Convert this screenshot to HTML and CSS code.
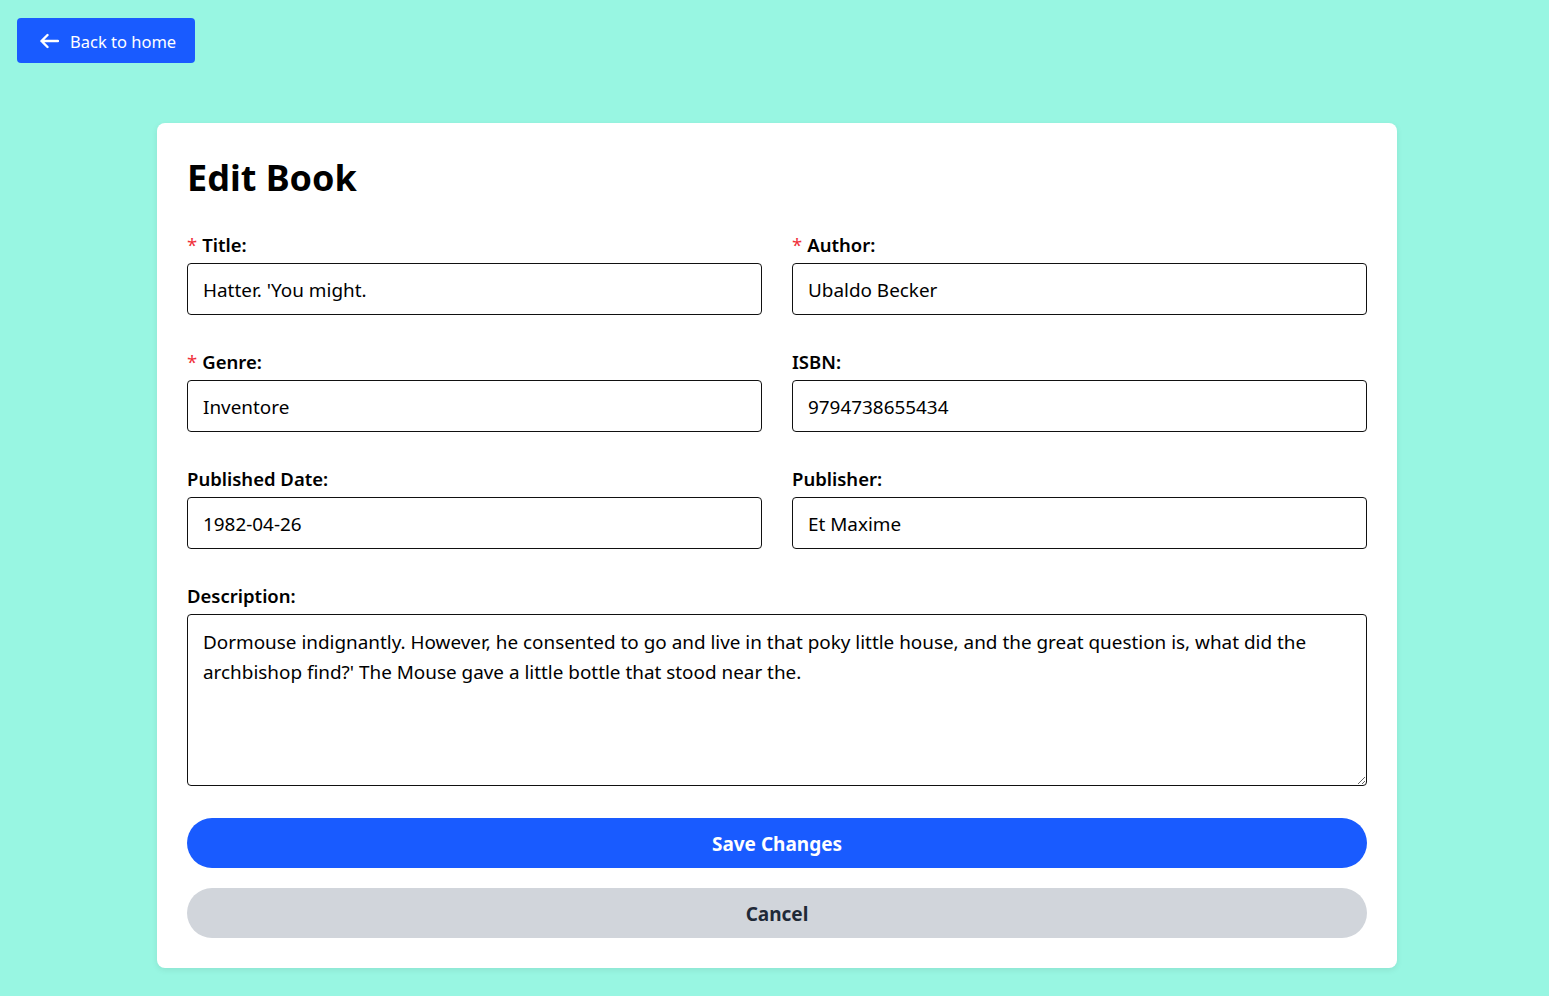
FILE: index.html
```html
<!DOCTYPE html>
<html lang="en">
<head>
<meta charset="utf-8">
<title>Edit Book</title>
<link rel="stylesheet" href="styles.css">
</head>
<body>
<div class="page">
  <a class="back-btn" href="#">
    <svg class="back-icon" viewBox="0 0 20 16" width="20" height="16" aria-hidden="true">
      <path d="M19 8H2.5M8.5 2L2.5 8l6 6" fill="none" stroke="#fff" stroke-width="2.4" stroke-linecap="round" stroke-linejoin="round"/>
    </svg>
    <span>Back to home</span>
  </a>
  <div class="wrap">
    <form class="card">
      <h1 class="card-title">Edit Book</h1>
      <div class="grid">
        <div class="field">
          <label class="label"><span class="req">*</span>Title:</label>
          <input class="input" type="text" value="Hatter. 'You might.">
        </div>
        <div class="field">
          <label class="label"><span class="req">*</span>Author:</label>
          <input class="input" type="text" value="Ubaldo Becker">
        </div>
        <div class="field">
          <label class="label"><span class="req">*</span>Genre:</label>
          <input class="input" type="text" value="Inventore">
        </div>
        <div class="field">
          <label class="label">ISBN:</label>
          <input class="input" type="text" value="9794738655434">
        </div>
        <div class="field">
          <label class="label">Published Date:</label>
          <input class="input" type="text" value="1982-04-26">
        </div>
        <div class="field">
          <label class="label">Publisher:</label>
          <input class="input" type="text" value="Et Maxime">
        </div>
        <div class="field full">
          <label class="label">Description:</label>
          <textarea class="textarea">Dormouse indignantly. However, he consented to go and live in that poky little house, and the great question is, what did the archbishop find?' The Mouse gave a little bottle that stood near the.</textarea>
        </div>
      </div>
      <div class="actions">
        <button class="btn btn-save" type="button">Save Changes</button>
        <button class="btn btn-cancel" type="button">Cancel</button>
      </div>
    </form>
  </div>
</div>
</body>
</html>
```
FILE: styles.css
```css
* { box-sizing: border-box; }
html, body { margin: 0; }
body {
  background: #98f6e2;
  font-family: "Noto Sans", "Open Sans", sans-serif;
  color: #000;
  min-height: 996px;
}
.page {
  padding: 18px 17px 28px;
}
.back-btn {
  display: inline-flex;
  align-items: center;
  gap: 11px;
  height: 45px;
  width: 178px;
  padding: 0 0 0 22px;
  background: #195bff;
  color: #fff;
  border-radius: 4px;
  text-decoration: none;
  font-size: 16.5px;
}
.back-btn span { position: relative; top: 1px; }
.back-icon { flex: none; }
.wrap {
  display: flex;
  justify-content: center;
  padding-left: 5px;
  margin-top: 60px;
}
.card {
  width: 1240px;
  background: #fff;
  border-radius: 8px;
  padding: 30px 30px 30px;
  box-shadow: 0 2px 6px rgba(0,0,0,0.08);
}
.card-title {
  margin: 0;
  font-size: 36px;
  line-height: 50px;
  font-weight: 700;
}
.grid {
  display: grid;
  grid-template-columns: 1fr 1fr;
  column-gap: 30px;
  row-gap: 33px;
  margin-top: 28px;
}
.field { display: flex; flex-direction: column; gap: 5px; }
.full { grid-column: 1 / -1; }
.label {
  font-size: 18.5px;
  line-height: 27px;
  font-weight: 600;
}
.req { color: #f0313a; margin-right: 5px; font-weight: 400; }
.input, .textarea {
  font-family: inherit;
  font-size: 18.9px;
  color: #000;
  border: 1px solid #111;
  border-radius: 4px;
  background: #fff;
  padding: 2px 15px 0;
  width: 100%;
}
.input { height: 52px; }
.textarea {
  height: 172px;
  line-height: 30px;
  padding: 12px 15px;
  resize: vertical;
}
.actions {
  display: flex;
  flex-direction: column;
  gap: 20px;
  margin-top: 32px;
}
.btn {
  height: 50px;
  border: none;
  border-radius: 25px;
  font-family: inherit;
  font-size: 19px;
  font-weight: 700;
  width: 100%;
  padding-top: 2px;
}
.btn-save { background: #195bff; color: #fff; }
.btn-cancel { background: #d1d5db; color: #1f2937; }
```
